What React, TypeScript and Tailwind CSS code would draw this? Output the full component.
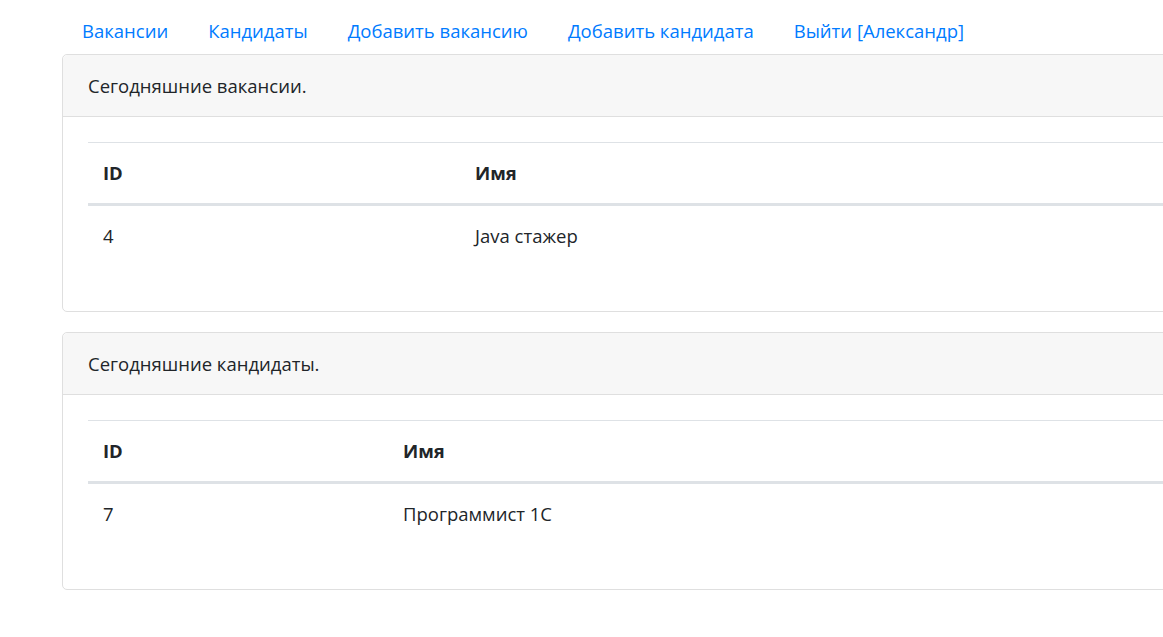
import React from "react";

const links = [
  "Вакансии",
  "Кандидаты",
  "Добавить вакансию",
  "Добавить кандидата",
  "Выйти [Александр]",
];

type Row = { id: string; name: string };

const TodayCard = ({
  title,
  rows,
  firstCol,
}: {
  title: string;
  rows: Row[];
  firstCol: string;
}) => {
  return (
    <div className="w-[1200px] rounded-[5px] border border-[#dfdfdf] bg-white">
      <div className="h-[62px] border-b border-[#dfdfdf] bg-[#f7f7f7] px-[25px] pt-[16px] pb-[14px] rounded-t-[5px]">
        {title}
      </div>
      <div className="p-[25px]">
        <table className="mb-[20px] w-full border-collapse text-left">
          <thead>
            <tr>
              <th
                className={`${firstCol} border-t border-b-[3px] border-[#dee2e6] p-[15px] align-bottom font-bold`}
              >
                ID
              </th>
              <th className="border-t border-b-[3px] border-[#dee2e6] p-[15px] align-bottom font-bold">
                Имя
              </th>
            </tr>
          </thead>
          <tbody>
            {rows.map((r) => (
              <tr key={r.id}>
                <td className="p-[15px] align-top">{r.id}</td>
                <td className="p-[15px] align-top">{r.name}</td>
              </tr>
            ))}
          </tbody>
        </table>
      </div>
    </div>
  );
};

const App = () => {
  return (
    <div
      className="min-h-screen w-full overflow-hidden bg-white text-[18.5px] leading-[30px] text-[#212529]"
      style={{ fontFamily: '"Open Sans", "Noto Sans", sans-serif' }}
    >
      <div className="pl-[62px] pt-[4px]">
        <ul className="flex">
          {links.map((l) => (
            <li key={l}>
              <a href="#" className="block px-5 pt-[12px] pb-[8px] text-[#007bff]">
                {l}
              </a>
            </li>
          ))}
        </ul>
        <TodayCard
          title="Сегодняшние вакансии."
          rows={[{ id: "4", name: "Java стажер" }]}
          firstCol="w-[372px]"
        />
        <div className="mt-5">
          <TodayCard
            title="Сегодняшние кандидаты."
            rows={[{ id: "7", name: "Программист 1С" }]}
            firstCol="w-[300px]"
          />
        </div>
      </div>
    </div>
  );
};

export default App;
